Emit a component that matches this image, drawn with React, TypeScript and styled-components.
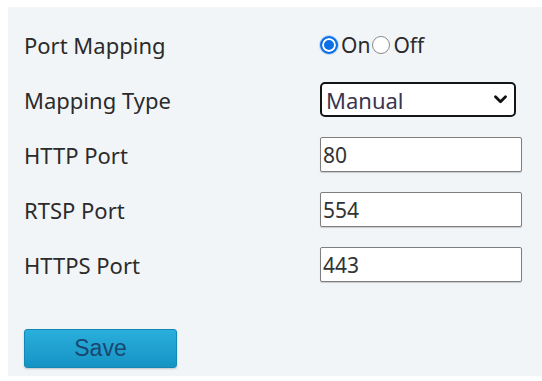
import styled, { createGlobalStyle } from "styled-components";

const GlobalStyle = createGlobalStyle`
  html, body {
    margin: 0;
    padding: 0;
    background: #ffffff;
  }
  body {
    font-family: "Noto Sans", "Open Sans", sans-serif;
  }
`;

const Page = styled.div`
  width: 542px;
  height: 381px;
  padding: 7px 0 5px 8px;
  box-sizing: border-box;
`;

const Panel = styled.div`
  height: 100%;
  background: #f2f5f8;
  padding: 10px 0 0 16px;
  box-sizing: border-box;
`;

const Form = styled.div`
  display: grid;
  grid-template-columns: 296px 202px;
  grid-auto-rows: 55px;
  align-items: center;
`;

const Label = styled.div`
  font-size: 22px;
  color: #2b2b2b;
`;

const RadioGroup = styled.div`
  display: flex;
  align-items: center;
  font-size: 21px;
  color: #2b2b2b;
`;

const RadioOption = styled.label`
  display: flex;
  align-items: center;
  gap: 3px;
  margin-right: 2px;
`;

const RadioDot = styled.span<{ checked: boolean }>`
  width: 18px;
  height: 18px;
  border-radius: 50%;
  box-sizing: border-box;
  border: ${(p) => (p.checked ? "2px solid #0b6fe6" : "1px solid #8a8a8a")};
  background: ${(p) => (p.checked ? "#0b6fe6" : "#ffffff")};
  box-shadow: ${(p) =>
    p.checked ? "inset 0 0 0 2px #ffffff, 0 0 0 1px #b8d4f4" : "none"};
`;

const Select = styled.div`
  width: 196px;
  height: 35px;
  box-sizing: border-box;
  border: 2px solid #151515;
  border-radius: 5px;
  background: #ffffff;
  display: flex;
  align-items: center;
  justify-content: space-between;
  padding: 0 7px 0 4px;
  font-size: 22px;
  color: #3a3550;
`;

const Input = styled.div`
  width: 202px;
  height: 35px;
  box-sizing: border-box;
  border: 1px solid #7e7e7e;
  border-radius: 2px;
  background: #ffffff;
  box-shadow: 0 1px 1px rgba(0, 0, 0, 0.18);
  display: flex;
  align-items: center;
  padding-left: 2px;
  font-size: 21px;
  color: #333333;
`;

const SaveButton = styled.button`
  margin-top: 37px;
  width: 153px;
  height: 39px;
  border: 1px solid #1387b5;
  border-radius: 3px;
  background: linear-gradient(#2aaedc, #1594c4);
  color: #1a4670;
  font-family: "Liberation Sans", Arial, sans-serif;
  font-size: 23px;
  box-shadow: 0 1px 2px rgba(0, 0, 0, 0.2);
`;

const ports = [
  { label: "HTTP Port", value: "80" },
  { label: "RTSP Port", value: "554" },
  { label: "HTTPS Port", value: "443" },
];

function Chevron() {
  return (
    <svg width="13" height="9" viewBox="0 0 13 9">
      <path
        d="M1.5 1.8 L6.5 6.8 L11.5 1.8"
        fill="none"
        stroke="#111"
        strokeWidth="2.8"
        strokeLinecap="round"
        strokeLinejoin="round"
      />
    </svg>
  );
}

export default function App() {
  return (
    <>
      <GlobalStyle />
      <Page>
        <Panel>
          <Form>
            <Label>Port Mapping</Label>
            <RadioGroup>
              <RadioOption>
                <RadioDot checked />
                On
              </RadioOption>
              <RadioOption>
                <RadioDot checked={false} />
                Off
              </RadioOption>
            </RadioGroup>
            <Label>Mapping Type</Label>
            <Select>
              Manual
              <Chevron />
            </Select>
            {ports.map((p) => (
              <>
                <Label key={p.label}>{p.label}</Label>
                <Input>{p.value}</Input>
              </>
            ))}
          </Form>
          <SaveButton>Save</SaveButton>
        </Panel>
      </Page>
    </>
  );
}
